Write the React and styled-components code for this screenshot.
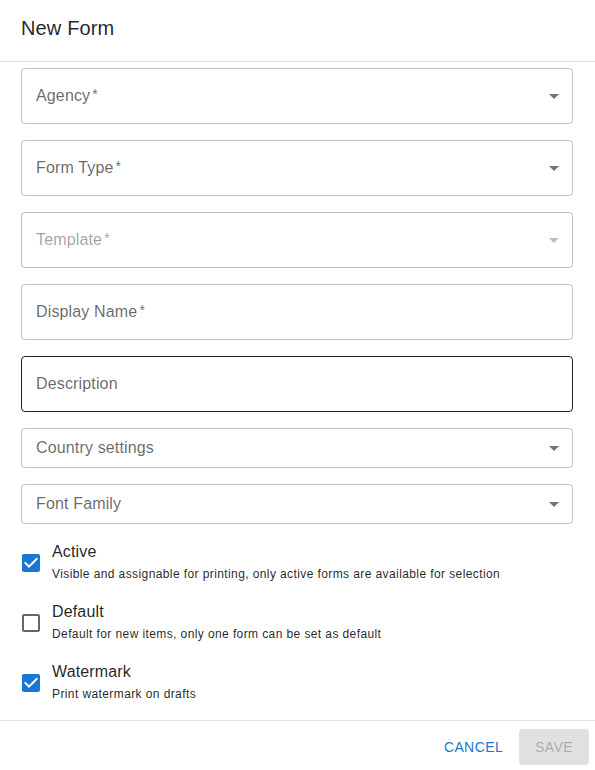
import React from 'react'
import styled, { createGlobalStyle } from 'styled-components'

const GlobalStyle = createGlobalStyle`
  * { box-sizing: border-box; }
  html, body { margin: 0; padding: 0; background: #fff; }
  body {
    font-family: "Liberation Sans", Arial, Helvetica, sans-serif;
    color: rgba(0, 0, 0, 0.87);
  }
`

const fields = [
  { label: 'Agency', required: true, select: true },
  { label: 'Form Type', required: true, select: true },
  { label: 'Template', required: true, select: true, disabled: true },
  { label: 'Display Name', required: true },
  { label: 'Description', focused: true },
  { label: 'Country settings', select: true, small: true },
  { label: 'Font Family', select: true, small: true },
]

const options = [
  { label: 'Active', helper: 'Visible and assignable for printing, only active forms are available for selection', checked: true },
  { label: 'Default', helper: 'Default for new items, only one form can be set as default', checked: false },
  { label: 'Watermark', helper: 'Print watermark on drafts', checked: true },
]

const ArrowDrop = ({ disabled }) => (
  <ArrowIcon viewBox="0 0 24 24" $disabled={disabled}>
    <path d="M7 10l5 5 5-5z" />
  </ArrowIcon>
)

const CheckIcon = ({ checked }) => (
  <CheckSvg viewBox="0 0 24 24" $checked={checked}>
    {checked ? (
      <path d="M19 3H5c-1.11 0-2 .9-2 2v14c0 1.1.89 2 2 2h14c1.11 0 2-.9 2-2V5c0-1.1-.89-2-2-2zm-9 14l-5-5 1.41-1.41L10 14.17l7.59-7.59L19 8l-9 9z" />
    ) : (
      <path d="M19 5v14H5V5h14m0-2H5c-1.1 0-2 .9-2 2v14c0 1.1.9 2 2 2h14c1.1 0 2-.9 2-2V5c0-1.1-.9-2-2-2z" />
    )}
  </CheckSvg>
)

const App = () => {
  return (
    <Dialog>
      <GlobalStyle />
      <Title>New Form</Title>
      <Content>
        {fields.map((f) => (
          <Field key={f.label} $small={f.small} $disabled={f.disabled} $focused={f.focused}>
            <FieldLabel $disabled={f.disabled}>
              {f.label}
              {f.required && <Req>*</Req>}
            </FieldLabel>
            {f.select && <ArrowDrop disabled={f.disabled} />}
          </Field>
        ))}
        <Options>
          {options.map((o) => (
            <OptionRow key={o.label}>
              <CheckBase>
                <CheckIcon checked={o.checked} />
              </CheckBase>
              <OptionText>
                <OptionLabel>{o.label}</OptionLabel>
                <OptionHelper>{o.helper}</OptionHelper>
              </OptionText>
            </OptionRow>
          ))}
        </Options>
      </Content>
      <Actions>
        <TextButton>Cancel</TextButton>
        <SaveButton disabled>Save</SaveButton>
      </Actions>
    </Dialog>
  )
}

export default App

const Dialog = styled.div`
  width: 595px;
  height: 770px;
  display: flex;
  flex-direction: column;
  background: #fff;
`

const Title = styled.h2`
  margin: 0;
  padding: 12px 20px 17px 21px;
  font-size: 20px;
  font-weight: 400;
  line-height: 32px;
  letter-spacing: 0.15px;
  color: rgba(0, 0, 0, 0.87);
  border-bottom: 1px solid #e0e0e0;
`

const Content = styled.div`
  flex: 1;
  display: flex;
  flex-direction: column;
  gap: 16px;
  padding: 6px 22px 0 21px;
`

const Field = styled.div`
  position: relative;
  height: ${(p) => (p.$small ? '40px' : '56px')};
  display: flex;
  align-items: center;
  padding: 0 14px 2px;
  border-radius: 4px;
  border: 1px solid
    ${(p) =>
      p.$focused ? 'rgba(0, 0, 0, 0.87)' : p.$disabled ? 'rgba(0, 0, 0, 0.26)' : 'rgba(0, 0, 0, 0.23)'};
`

const FieldLabel = styled.span`
  font-size: 16px;
  line-height: 23px;
  letter-spacing: 0.15px;
  color: ${(p) => (p.$disabled ? 'rgba(0, 0, 0, 0.38)' : 'rgba(0, 0, 0, 0.6)')};
`

const Req = styled.span`
  margin-left: 2px;
  font-size: 14px;
  vertical-align: 2px;
`

const ArrowIcon = styled.svg`
  position: absolute;
  right: 6px;
  top: 50%;
  width: 24px;
  height: 24px;
  margin-top: -12px;
  fill: ${(p) => (p.$disabled ? 'rgba(0, 0, 0, 0.26)' : 'rgba(0, 0, 0, 0.54)')};
`

const Options = styled.div`
  display: flex;
  flex-direction: column;
  gap: 16px;
  margin-top: 1px;
`

const OptionRow = styled.label`
  display: flex;
  align-items: center;
  margin-left: -11px;
`

const CheckBase = styled.span`
  display: inline-flex;
  padding: 9px;
`

const CheckSvg = styled.svg`
  width: 24px;
  height: 24px;
  fill: ${(p) => (p.$checked ? '#1976d2' : 'rgba(0, 0, 0, 0.6)')};
`

const OptionText = styled.div`
  display: flex;
  flex-direction: column;
`

const OptionLabel = styled.span`
  font-size: 16px;
  line-height: 22px;
  letter-spacing: 0.15px;
  color: rgba(0, 0, 0, 0.87);
`

const OptionHelper = styled.span`
  font-size: 12px;
  line-height: 22px;
  letter-spacing: 0.4px;
  color: rgba(0, 0, 0, 0.87);
`

const Actions = styled.div`
  display: flex;
  justify-content: flex-end;
  align-items: center;
  gap: 8px;
  height: 50px;
  padding: 8px 6px 5px 8px;
  border-top: 1px solid #e0e0e0;
`

const TextButton = styled.button`
  min-width: 64px;
  height: 36px;
  padding: 6px 8px;
  border: 0;
  border-radius: 4px;
  background: transparent;
  font-family: "Liberation Sans", Arial, Helvetica, sans-serif;
  font-size: 14px;
  font-weight: 400;
  letter-spacing: 0.4px;
  text-transform: uppercase;
  color: #1976d2;
`

const SaveButton = styled(TextButton)`
  padding: 6px 16px;
  background: rgba(0, 0, 0, 0.12);
  color: rgba(0, 0, 0, 0.26);
`
